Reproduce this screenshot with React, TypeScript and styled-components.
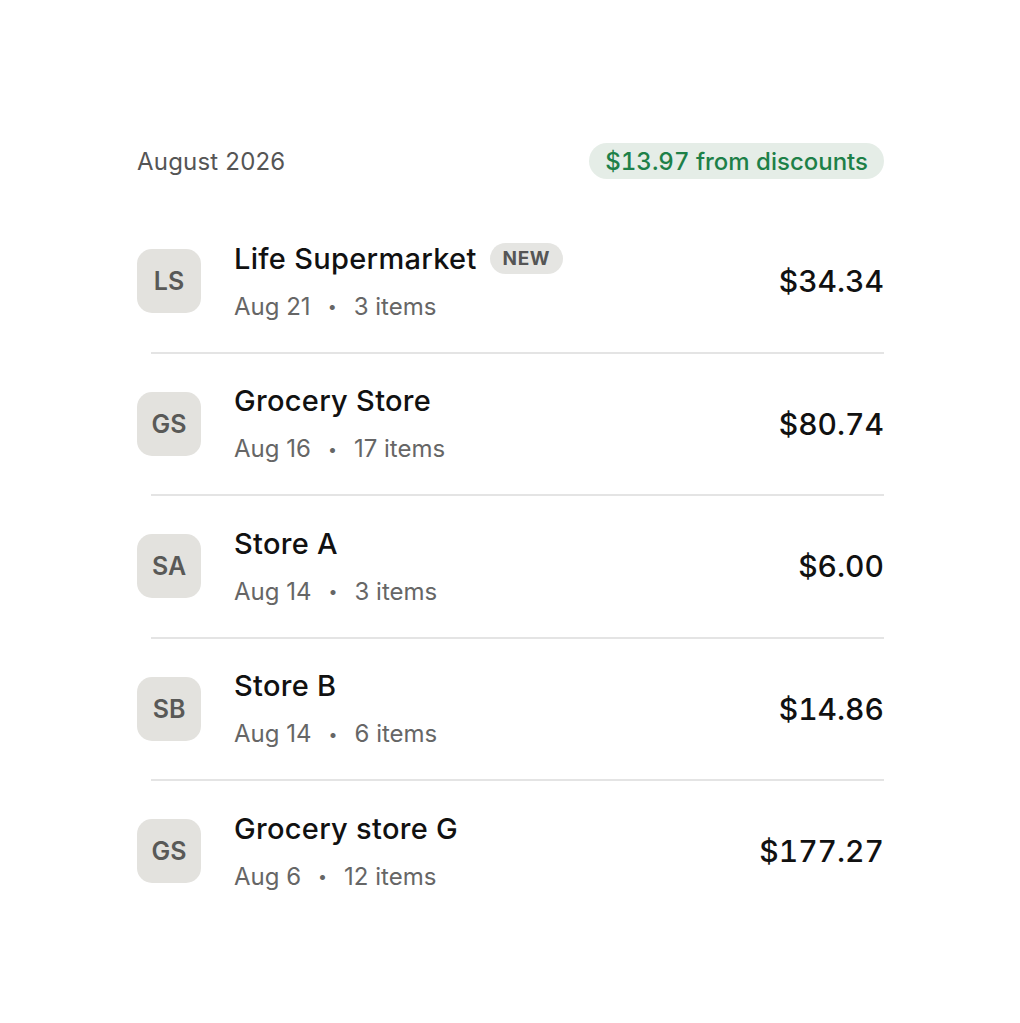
import React from "react";
import styled, { createGlobalStyle } from "styled-components";

const GlobalStyle = createGlobalStyle`
    body {
        margin: 0;
        background: #ffffff;
        font-family: Inter, "Noto Sans", sans-serif;
        -webkit-font-smoothing: antialiased;
    }
`;

type Purchase = {
    id: number;
    initials: string;
    name: string;
    isNew?: boolean;
    date: string;
    items: number;
    total: string;
};

const purchases: Purchase[] = [
    { id: 1, initials: "LS", name: "Life Supermarket", isNew: true, date: "Aug 21", items: 3, total: "$34.34" },
    { id: 2, initials: "GS", name: "Grocery Store", date: "Aug 16", items: 17, total: "$80.74" },
    { id: 3, initials: "SA", name: "Store A", date: "Aug 14", items: 3, total: "$6.00" },
    { id: 4, initials: "SB", name: "Store B", date: "Aug 14", items: 6, total: "$14.86" },
    { id: 5, initials: "GS", name: "Grocery store G", date: "Aug 6", items: 12, total: "$177.27" },
];

const Page = styled.div`
    width: 747px;
    margin-left: 137px;
    padding-top: 143px;
`;

const Header = styled.div`
    display: flex;
    justify-content: space-between;
    align-items: center;
    height: 36px;
    margin-bottom: 32px;
`;

const Month = styled.h2`
    margin: 0;
    font-size: 24px;
    font-weight: 400;
    color: #555555;
    letter-spacing: 0.2px;
`;

const SavingsPill = styled.span`
    display: inline-flex;
    align-items: center;
    height: 36px;
    padding: 0 16px;
    border-radius: 18px;
    background: #e5ede7;
    color: #1d8048;
    font-size: 24px;
    font-weight: 500;
    font-variant-numeric: tabular-nums;
`;

const List = styled.ul`
    list-style: none;
    margin: 0;
    padding: 0;
`;

const Row = styled.li`
    display: flex;
    align-items: center;
    padding: 30.25px 0;
`;

const Divider = styled.li`
    height: 2px;
    margin-left: 14px;
    background: #e4e4e4;
`;

const Avatar = styled.div`
    flex: none;
    width: 64px;
    height: 64px;
    border-radius: 15px;
    background: #e3e2de;
    color: #595957;
    display: flex;
    align-items: center;
    justify-content: center;
    font-size: 25px;
    font-weight: 600;
`;

const Info = styled.div`
    flex: 1;
    display: flex;
    flex-direction: column;
    gap: 16px;
    margin-left: 33px;
`;

const TitleLine = styled.div`
    display: flex;
    align-items: center;
    gap: 13px;
    height: 34px;
`;

const StoreName = styled.span`
    font-size: 29px;
    font-weight: 500;
    letter-spacing: 0.3px;
    color: #111111;
`;

const NewBadge = styled.span`
    display: inline-flex;
    align-items: center;
    height: 31px;
    padding: 0 13px;
    border-radius: 16px;
    background: #e5e5e2;
    color: #555555;
    font-size: 19px;
    font-weight: 700;
    letter-spacing: 0.6px;
`;

const Meta = styled.div`
    display: flex;
    align-items: center;
    height: 30px;
    font-size: 24px;
    color: #666666;
`;

const Dot = styled.span`
    margin: 0 17px;
    font-size: 16px;
`;

const Total = styled.span`
    font-size: 30px;
    font-weight: 500;
    color: #111111;
    font-variant-numeric: tabular-nums;
`;

export default function App() {
    return (
        <>
            <GlobalStyle />
            <Page>
                <Header>
                    <Month>August 2026</Month>
                    <SavingsPill>$13.97 from discounts</SavingsPill>
                </Header>
                <List>
                    {purchases.map((p, i) => (
                        <React.Fragment key={p.id}>
                            {i > 0 && <Divider />}
                            <Row>
                                <Avatar>{p.initials}</Avatar>
                                <Info>
                                    <TitleLine>
                                        <StoreName>{p.name}</StoreName>
                                        {p.isNew && <NewBadge>NEW</NewBadge>}
                                    </TitleLine>
                                    <Meta>
                                        {p.date}
                                        <Dot>•</Dot>
                                        {p.items} items
                                    </Meta>
                                </Info>
                                <Total>{p.total}</Total>
                            </Row>
                        </React.Fragment>
                    ))}
                </List>
            </Page>
        </>
    );
}
